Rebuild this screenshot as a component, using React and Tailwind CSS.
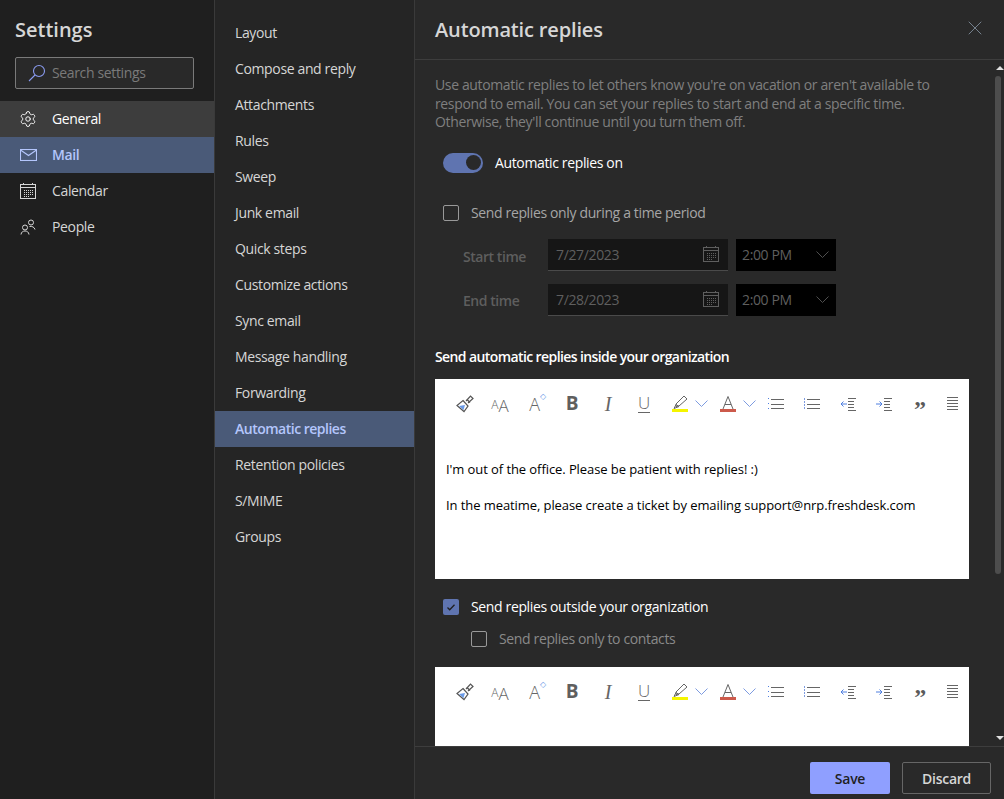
import React from 'react';
import { X, Settings } from 'lucide-react';

const navItems = [
  { label: 'General', icon: 'gear', rowClass: 'bg-[#3d3d3d] text-white' },
  { label: 'Mail', icon: 'mail', rowClass: 'bg-[#4a5a78] text-[#b4c6fc] font-semibold' },
  { label: 'Calendar', icon: 'calendar', rowClass: 'text-[#d6d6d6]' },
  { label: 'People', icon: 'people', rowClass: 'text-[#d6d6d6]' },
];

const subItems = [
  'Layout', 'Compose and reply', 'Attachments', 'Rules', 'Sweep', 'Junk email', 'Quick steps',
  'Customize actions', 'Sync email', 'Message handling', 'Forwarding', 'Automatic replies',
  'Retention policies', 'S/MIME', 'Groups',
];

const PeopleIcon = () => (
  <svg width="16" height="16" viewBox="0 0 16 16" fill="none" stroke="currentColor" strokeWidth="1">
    <circle cx="5" cy="8.500" r="2.500" />
    <path d="M1 15.500c.3-2.500 2-3.500 4-3.500s3.700 1 4 3.500" />
    <circle cx="11" cy="3.500" r="2.500" />
    <path d="M9.500 7.500c2.500-.5 4.800.5 5.500 3" />
  </svg>
);

const MailIcon = () => (
  <svg width="17" height="12" viewBox="0 0 17 12" fill="none" stroke="currentColor" strokeWidth="1.100">
    <rect x="0.500" y="0.500" width="16" height="11" />
    <path d="M0.500 1l8 5.500 8-5.500" />
  </svg>
);

const CalendarIcon = ({ size = 16 }) => (
  <svg width={size} height={size} viewBox="0 0 16 16" fill="none" stroke="currentColor" strokeWidth="1">
    <rect x="0.500" y="1.500" width="15" height="14" />
    <path d="M0.500 4.500h15M3.500 0v2M12.500 0v2" />
    <path d="M4 7.500h9M4 9.500h9M4 11.500h9M4 13.500h6" strokeDasharray="1 1" />
  </svg>
);

const Chevron = ({ color }) => (
  <svg className="shrink-0" width="13" height="7" viewBox="0 0 13 7" fill="none" stroke={color} strokeWidth="1">
    <path d="M0.500 0.500l6 6 6-6" />
  </svg>
);

const NavIcon = ({ name }) => {
  if (name === 'gear') return <Settings size={18} strokeWidth={1.25} />;
  if (name === 'mail') return <MailIcon />;
  if (name === 'calendar') return <CalendarIcon />;
  return <PeopleIcon />;
};

const Checkbox = ({ checked }) => (
  <span className={`w-4 h-4 shrink-0 rounded-[2px] flex items-center justify-center ${checked ? 'bg-[#5f74b0]' : 'border border-[#999999]'}`}>
    {checked && (
      <svg width="10" height="10" viewBox="0 0 10 10" fill="none" stroke="#1f1f1f" strokeWidth="1.300">
        <path d="M1.500 5.500l2.200 2.200 4.800-5" />
      </svg>
    )}
  </span>
);

const DateRow = ({ label, date, className, labelClass }) => (
  <div className={`flex items-center ml-[28px] ${className}`}>
    <span className={`w-[85px] font-semibold text-[#5e5e5e] tracking-[-0.45px] ${labelClass}`}>{label}</span>
    <div className="w-[180px] h-[32px] bg-[#161616] border-b border-[#4a4a4a] flex items-center justify-between pl-[8px] pr-[9px] text-[#5f5f5f]">
      <span>{date}</span>
      <CalendarIcon />
    </div>
    <div className="w-[100px] h-[32px] ml-[8px] bg-black flex items-center justify-between pl-[6px] pr-[7px] text-[#5f5f5f]">
      <span>2:00 PM</span>
      <Chevron color="#4f4f4f" />
    </div>
  </div>
);

// one toolbar button, 36px wide like the real ribbon
const Cell = ({ children, className = '' }) => (
  <span className={`w-[36px] h-[30px] shrink-0 flex items-center justify-center ${className}`}>{children}</span>
);

const ListIcon = ({ numbered }) => (
  <svg width="16" height="14" viewBox="0 0 16 14" fill="none" strokeWidth="1">
    {numbered
      ? <path d="M0.500 1v12" stroke="#7d9be0" strokeDasharray="2 1" />
      : <path d="M0.500 1v12" stroke="#4f7fe0" strokeDasharray="1 4" />}
    <path d="M3 2.500h13M3 7.500h13M3 11.500h13" stroke="#666666" />
  </svg>
);

const IndentIcon = ({ flip }) => (
  <svg width="17" height="14" viewBox="0 0 17 14" fill="none" strokeWidth="1">
    <path d={flip ? 'M0 7h6M3.500 4.500L6 7l-2.500 2.500' : 'M7 7H1M3.500 4.500L1 7l2.500 2.500'} stroke="#4f7fe0" />
    <path d="M8 1.500h8M8 4.500h6M8 7.500h6M8 10.500h6M8 13.500h8" stroke="#666666" />
  </svg>
);

const EditorToolbar = () => (
  <div className="h-[50px] flex items-center pl-[11px] text-[#666666] shrink-0">
    <Cell className="pl-[2px]">
      <svg width="20" height="20" viewBox="0 0 20 20" fill="none" stroke="#555555" strokeWidth="1.200">
        <path d="M11 7l4.500-5 2.500 2.500-5 4.500" />
        <path d="M12 5.500l3 3" />
        <path d="M8 6.500L13 12l-4 5.500-7-6z" />
        <path d="M4 12l6-1-1.500 5z" fill="#6b9be8" stroke="none" />
      </svg>
    </Cell>
    <Cell>
      <span className="leading-none whitespace-nowrap font-light text-[12px] tracking-normal -mt-[2px]">A<span className="relative top-[3px] text-[17px]">A</span></span>
    </Cell>
    <Cell className="pr-[3px]">
      <span className="relative leading-none text-[18px] font-light">A
        <span className="absolute -top-[3px] left-[11px] text-[#6b9be8] text-[8px]">◇</span>
      </span>
    </Cell>
    <Cell><span className="font-bold text-[19px] leading-none text-[#5f5f5f]">B</span></Cell>
    <Cell><span className="italic text-[20px] leading-none font-['Liberation_Serif',serif]">I</span></Cell>
    <Cell>
      <span className="flex flex-col items-center">
        <span className="text-[17px] leading-[16px] font-light">U</span>
        <span className="w-[12px] h-px mt-[1px] bg-[#666666]" />
      </span>
    </Cell>
    <Cell>
      <span className="flex flex-col items-center">
        <svg width="16" height="13" viewBox="0 0 16 13" fill="none" stroke="#666666" strokeWidth="1">
          <path d="M4 8l8-8 3 3-8 7-3 .5zM2 12.500l2-4 3 2z" />
        </svg>
        <span className="w-[16px] h-[3px] bg-[#f5f500]" />
      </span>
    </Cell>
    <span className="w-[6px] flex justify-center"><Chevron color="#7d9be0" /></span>
    <span className="w-[6px]" />
    <Cell>
      <span className="flex flex-col items-center">
        <svg width="12" height="13" viewBox="0 0 12 13" fill="none" stroke="#666666" strokeWidth="1">
          <path d="M1 13L6 0.500 11 13M3 8.500h6" />
        </svg>
        <span className="w-[16px] h-[3px] bg-[#cc5a4b]" />
      </span>
    </Cell>
    <span className="w-[6px] flex justify-center"><Chevron color="#7d9be0" /></span>
    <span className="w-[6px]" />
    <Cell><ListIcon /></Cell>
    <Cell><ListIcon numbered /></Cell>
    <Cell><IndentIcon /></Cell>
    <Cell><IndentIcon flip /></Cell>
    <Cell><span className="font-bold text-[24px] leading-none h-[14px] text-[#5a5a5a] font-['Liberation_Serif',serif]">”</span></Cell>
    <span className="w-[28px] shrink-0 flex justify-center">
      <svg width="11" height="14" viewBox="0 0 11 14" fill="none" stroke="#666666" strokeWidth="1">
        <path d="M0 0.500h11M0 3.500h11M0 6.500h11M0 9.500h11M0 12.500h11" />
      </svg>
    </span>
  </div>
);

export default function App() {
  return (
    <div className="w-[1004px] h-[799px] flex overflow-hidden bg-[#292929] text-[14px] font-['Open_Sans',sans-serif] tracking-[-0.36px]">
      {/* settings categories */}
      <div className="w-[215px] shrink-0 bg-[#1f1f1f] border-r border-[#3a3a3a]">
        <h1 className="pl-[15px] pt-[15px] h-[57px] text-[20px] leading-[30px] font-semibold text-[#d6d6d6] tracking-normal">Settings</h1>
        <div className="mx-[15px] w-[179px] h-[32px] border border-[#7a7a7a] rounded-[2px] bg-[#292929] flex items-center pl-[12px] text-[#7a7a7a]">
          <svg className="shrink-0" width="18" height="18" viewBox="0 0 18 18" fill="none" stroke="#8a9bf0" strokeWidth="1.100">
            <circle cx="11" cy="7" r="5.500" />
            <path d="M7 11l-6 6" />
          </svg>
          <span className="ml-[6px] pb-[1px]">Search settings</span>
        </div>
        <div className="mt-[12px]">
          {navItems.map((item) => (
            <div key={item.label} className={`h-[36px] flex items-center pl-[19px] ${item.rowClass}`}>
              <span className="w-[18px] flex justify-center"><NavIcon name={item.icon} /></span>
              <span className="ml-[15px] pb-[2px]">{item.label}</span>
            </div>
          ))}
        </div>
      </div>

      {/* mail sub pages */}
      <div className="w-[200px] shrink-0 bg-[#252525] border-r border-[#3a3a3a] pt-[15px]">
        {subItems.map((item) => (
          <div
            key={item}
            className={`h-[36px] flex items-center pl-[20px] pb-[2px] ${item === 'Automatic replies' ? 'bg-[#4a5a78] text-[#b4c6fc] font-semibold tracking-[-0.5px]' : 'text-[#d6d6d6]'}`}
          >
            {item}
          </div>
        ))}
      </div>

      {/* automatic replies panel */}
      <div className="flex-1 min-w-0 flex flex-col">
        <div className="h-[60px] shrink-0 border-b border-[#3d3d3d] flex items-start justify-between pl-[20px] pr-[17px] pt-[15px]">
          <h2 className="text-[20px] leading-[30px] font-semibold text-[#d6d6d6] tracking-[-0.15px]">Automatic replies</h2>
          <X className="mt-[1px] text-[#76828e]" size={24} strokeWidth={1} />
        </div>

        <div className="flex-1 min-h-0 flex">
          <div className="flex-1 min-w-0 overflow-hidden pl-[20px]">
            <p className="mt-[16px] w-[510px] text-[#7f7f7f] leading-[18.500px]">
              Use automatic replies to let others know you're on vacation or aren't available to respond to email. You can set your replies to start and end at a specific time. Otherwise, they'll continue until you turn them off.
            </p>

            <div className="mt-[21px] ml-[8px] flex items-center h-[20px]">
              <span className="w-[40px] h-[20px] rounded-full bg-[#5f74b0] flex items-center justify-end pr-[2px]">
                <span className="w-[15px] h-[15px] rounded-full bg-[#292929]" />
              </span>
              <span className="ml-[12px] text-white">Automatic replies on</span>
            </div>

            <div className="mt-[32px] ml-[8px] flex items-center h-[16px]">
              <Checkbox />
              <span className="ml-[12px] text-[#a6a6a6]">Send replies only during a time period</span>
            </div>

            <DateRow label="Start time" date="7/27/2023" className="mt-[18px]" labelClass="pt-[3px]" />
            <DateRow label="End time" date="7/28/2023" className="mt-[13px]" labelClass="pt-[1px]" />

            <h3 className="mt-[31px] h-[20px] leading-[20px] font-semibold text-white tracking-[-0.6px]">Send automatic replies inside your organization</h3>

            <div className="mt-[12px] w-[534px] h-[200px] bg-white text-black text-[13px] overflow-hidden tracking-[-0.08px]">
              <EditorToolbar />
              <div className="pl-[11px] pt-[31px] leading-[18px]">
                <p>I'm out of the office. Please be patient with replies! :)</p>
                <p className="mt-[18px]">In the meatime, please create a ticket by emailing support@nrp.freshdesk.com</p>
              </div>
            </div>

            <div className="mt-[20px] ml-[8px] flex items-center h-[16px]">
              <Checkbox checked />
              <span className="ml-[12px] text-white">Send replies outside your organization</span>
            </div>
            <div className="mt-[16px] ml-[36px] flex items-center h-[16px]">
              <Checkbox />
              <span className="ml-[12px] text-[#8a8a8a]">Send replies only to contacts</span>
            </div>

            <div className="mt-[20px] w-[534px] h-[200px] bg-white">
              <EditorToolbar />
            </div>
          </div>

          {/* scrollbar */}
          <div className="w-[9px] shrink-0 flex flex-col items-center pt-[6px] pb-[6px]">
            <span className="w-0 h-0 border-x-[4px] border-x-transparent border-b-[4px] border-b-[#e0e0e0]" />
            <span className="mt-[6px] w-[6px] h-[498px] rounded-[3px] bg-[#4d4d4d] self-start" />
            <span className="mt-auto w-0 h-0 border-x-[4px] border-x-transparent border-t-[4px] border-t-[#e0e0e0]" />
          </div>
        </div>

        <div className="h-[53px] shrink-0 border-t border-[#3d3d3d] flex items-start justify-end pt-[15px] pr-[13px]">
          <button className="w-[80px] h-[32px] rounded-[2px] bg-[#8f9fff] text-[#1f1f1f] font-semibold tracking-[-0.25px]">Save</button>
          <button className="ml-[12px] w-[89px] h-[32px] rounded-[2px] border border-[#666666] text-[#d6d6d6] font-semibold tracking-[-0.25px]">Discard</button>
        </div>
      </div>
    </div>
  );
}
